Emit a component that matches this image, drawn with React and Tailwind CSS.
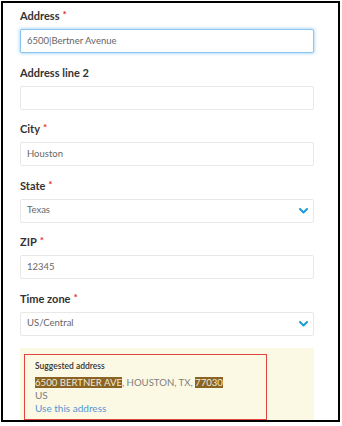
import React from "react";

const Chevron = () => (
  <svg width="9" height="6" viewBox="0 0 9 6" className="shrink-0">
    <polyline points="1,1 4.5,4.5 8,1" fill="none" stroke="#1d9ad8" strokeWidth="2" strokeLinecap="round" strokeLinejoin="round" />
  </svg>
);

function Field({ label, value, focused, select }) {
  return (
    <div className="mb-[12.5px]">
      <div className="h-[14px] mb-[6px] flex items-center text-[11px] font-bold text-[#333] leading-[14px]">
        {label}
        <span className="text-[#e0302e] ml-[3px] text-[10px] relative top-[-2px]">*</span>
      </div>
      <div
        className={
          "h-[24px] w-[294px] rounded-[2px] bg-white flex items-center justify-between pl-[6px] pr-[5px] text-[9.5px] text-[#666] " +
          (focused
            ? "border border-[#8cc6f2] shadow-[0_0_3px_1px_rgba(140,198,242,0.6)]"
            : "border border-[#e8e8e8]")
        }
      >
        <span>{value}</span>
        {select && <Chevron />}
      </div>
    </div>
  );
}

function PlainField({ label }) {
  return (
    <div className="mb-[12.5px]">
      <div className="h-[14px] mb-[6px] flex items-center text-[11px] font-bold text-[#333] leading-[14px]">
        {label}
      </div>
      <div className="h-[24px] w-[294px] rounded-[2px] bg-white border border-[#e8e8e8]" />
    </div>
  );
}

export default function App() {
  return (
    <div className="w-[342px] h-[426px] bg-white" style={{ fontFamily: "Lato, 'Open Sans', sans-serif" }}>
      <div className="ml-px mt-px w-[339px] h-[421px] border-2 border-black pl-[17px] pt-[6px] overflow-hidden">
        <Field label="Address" value="6500|Bertner Avenue" focused />
        <PlainField label="Address line 2" />
        <Field label="City" value="Houston" />
        <Field label="State" value="Texas" select />
        <Field label="ZIP" value="12345" />
        <Field label="Time zone" value="US/Central" select />
        <div className="w-[294px] h-[75px] bg-[#fbf8e4] pt-[6px] pl-[4px] mt-[0.5px]">
          <div className="w-[243px] h-[66px] border-[1.5px] border-[#e2453f] pl-[10px] pt-[5px]">
            <div className="text-[8.5px] font-semibold text-[#333] leading-[12px]">Suggested address</div>
            <div className="text-[9.6px] text-[#808080] leading-[12px] mt-[5px] whitespace-nowrap">
              <span className="bg-[#8a6424] text-[#f3ead7]">6500 BERTNER AVE</span>, HOUSTON, TX,{" "}
              <span className="bg-[#8a6424] text-[#f3ead7]">77030</span>
            </div>
            <div className="text-[10px] text-[#808080] leading-[12px]">US</div>
            <div className="text-[10px] text-[#5596d6] leading-[13px] mt-[0.5px]">Use this address</div>
          </div>
        </div>
      </div>
    </div>
  );
}
